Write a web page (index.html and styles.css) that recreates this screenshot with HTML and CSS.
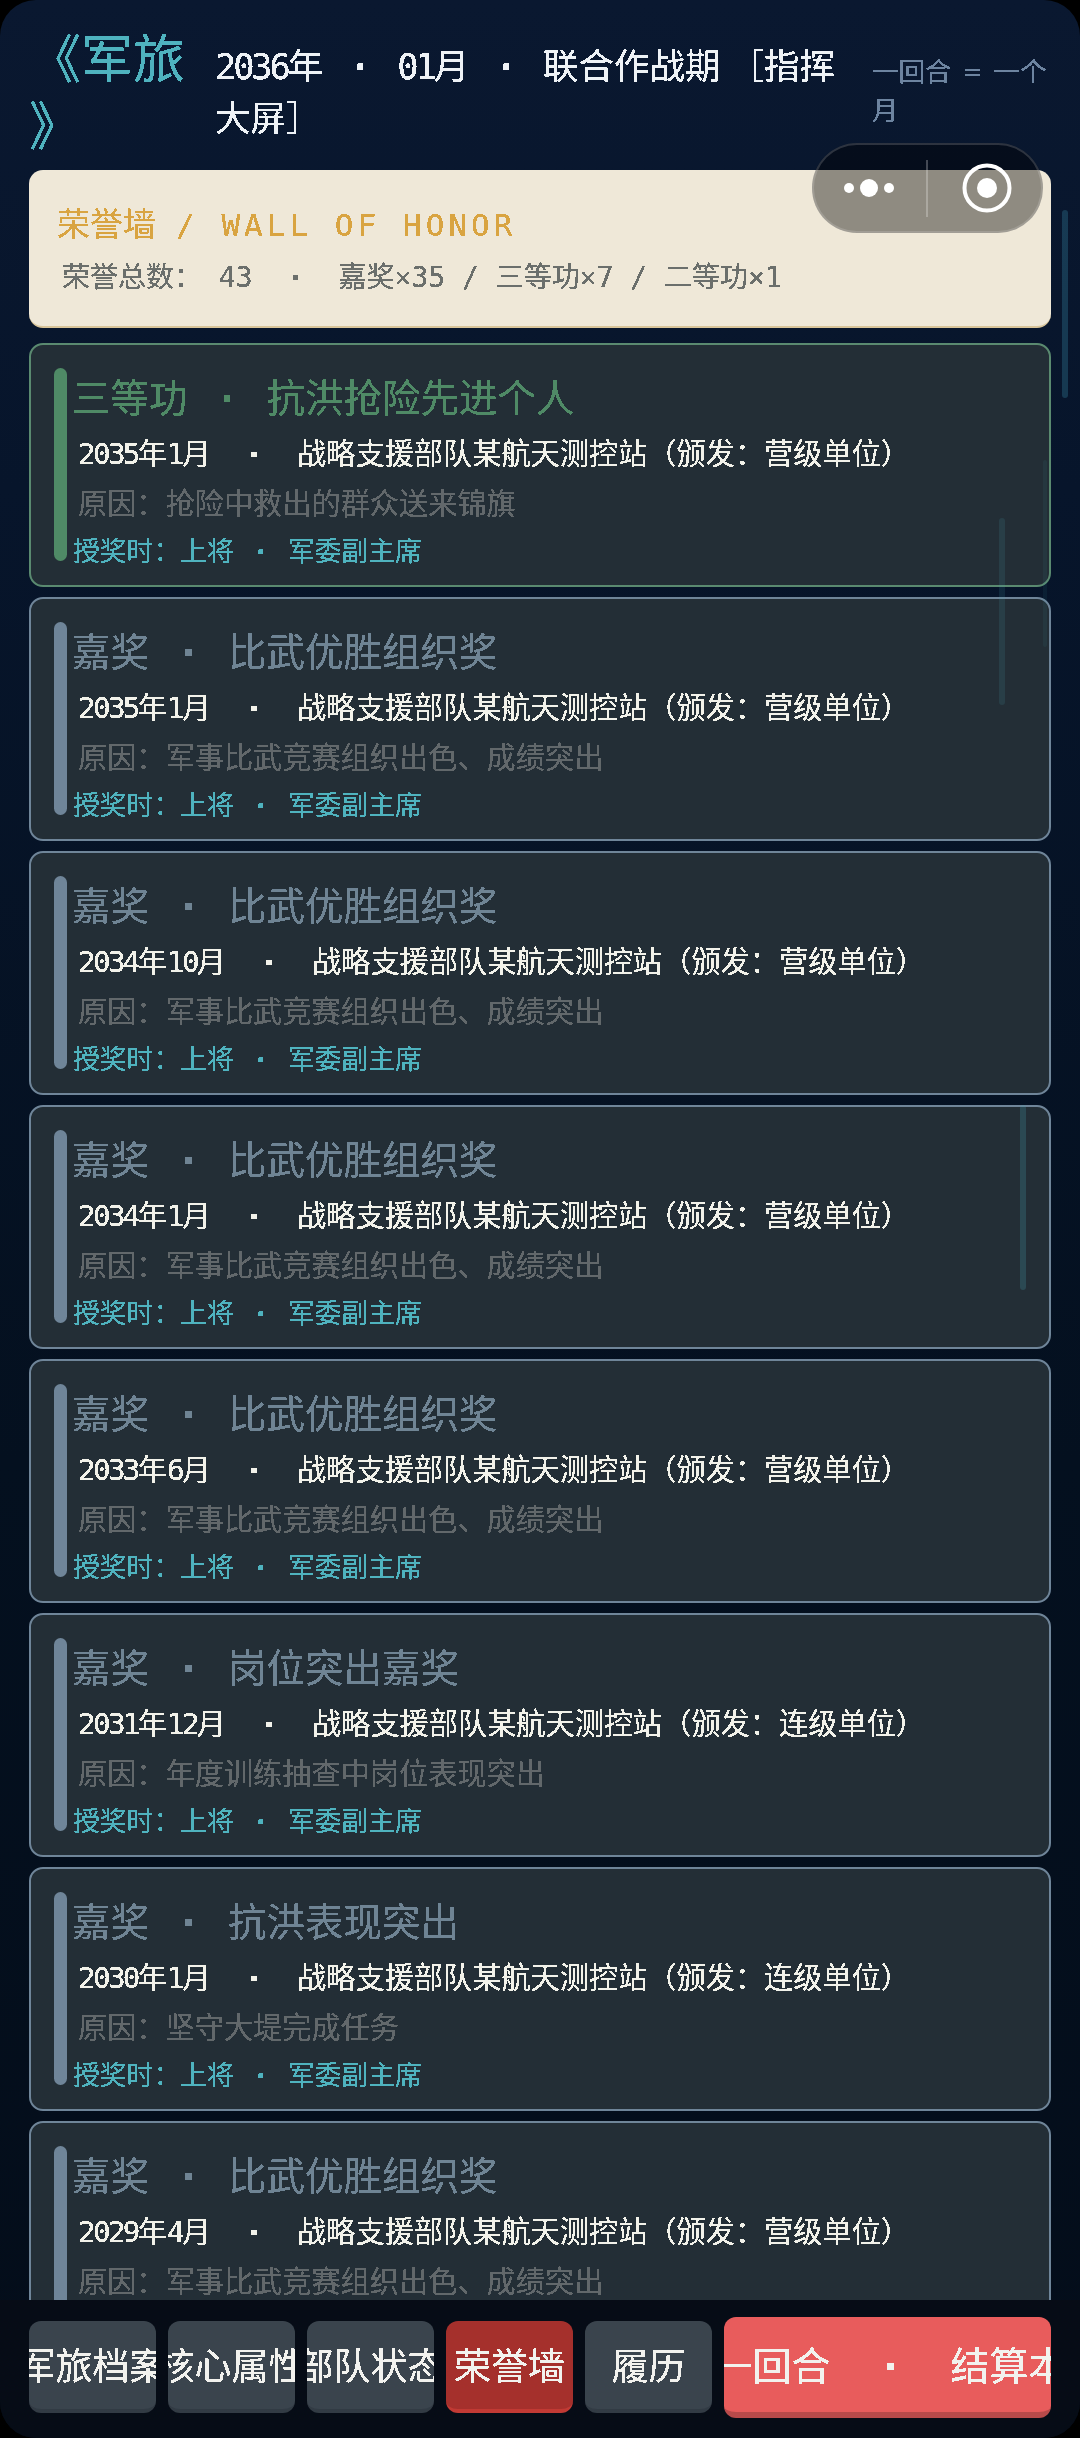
FILE: index.html
```html
<!DOCTYPE html>
<html lang="zh-CN">

<head>
    <meta charset="UTF-8">
    <title>军旅 - 荣誉墙</title>
    <link rel="stylesheet" href="styles.css">
</head>

<body>
    <!-- hard edge for the text, the game font has no smoothing -->
    <svg class="defs" width="0" height="0">
        <filter id="crisp" x="0" y="0" width="100%" height="100%" color-interpolation-filters="sRGB">
            <feComponentTransfer>
                <feFuncA type="discrete" tableValues="0 1 1" />
            </feComponentTransfer>
        </filter>
    </svg>

    <div class="phone">
        <header class="top">
            <h1 class="logo">《军旅》</h1>
            <div class="period"><span class="n">2036</span>年<span class="dot">·</span><span class="n">01</span>月<span class="dot">·</span>联合作战期 &#xFF3B;指挥大屏&#xFF3D;</div>
            <div class="rule">一回合<span class="eq">=</span>一个月</div>
        </header>

        <section class="banner">
            <div class="banner-title">荣誉墙<span class="latin">/ WALL OF HONOR</span></div>
            <div class="banner-sum">荣誉总数&#xFF1A;<span class="n">&nbsp;43</span><span class="dot">·</span>嘉奖<span class="n">×35 / </span>三等功<span class="n">×7 / </span>二等功<span class="n">×1</span></div>
        </section>

        <main class="list">
            <article class="card merit">
                <div class="card-title">三等功<span class="dot">·</span>抗洪抢险先进个人</div>
                <div class="card-line"><span class="n">2035</span>年<span class="n">1</span>月<span class="dot">·</span>战略支援部队某航天测控站&#xFF08;颁发&#xFF1A;营级单位&#xFF09;</div>
                <div class="card-why">原因&#xFF1A;抢险中救出的群众送来锦旗</div>
                <div class="card-by">授奖时&#xFF1A;上将<span class="dot">·</span>军委副主席</div>
            </article>
            <article class="card">
                <div class="card-title">嘉奖<span class="dot">·</span>比武优胜组织奖</div>
                <div class="card-line"><span class="n">2035</span>年<span class="n">1</span>月<span class="dot">·</span>战略支援部队某航天测控站&#xFF08;颁发&#xFF1A;营级单位&#xFF09;</div>
                <div class="card-why">原因&#xFF1A;军事比武竞赛组织出色、成绩突出</div>
                <div class="card-by">授奖时&#xFF1A;上将<span class="dot">·</span>军委副主席</div>
            </article>
            <article class="card">
                <div class="card-title">嘉奖<span class="dot">·</span>比武优胜组织奖</div>
                <div class="card-line"><span class="n">2034</span>年<span class="n">10</span>月<span class="dot">·</span>战略支援部队某航天测控站&#xFF08;颁发&#xFF1A;营级单位&#xFF09;</div>
                <div class="card-why">原因&#xFF1A;军事比武竞赛组织出色、成绩突出</div>
                <div class="card-by">授奖时&#xFF1A;上将<span class="dot">·</span>军委副主席</div>
            </article>
            <article class="card">
                <div class="card-title">嘉奖<span class="dot">·</span>比武优胜组织奖</div>
                <div class="card-line"><span class="n">2034</span>年<span class="n">1</span>月<span class="dot">·</span>战略支援部队某航天测控站&#xFF08;颁发&#xFF1A;营级单位&#xFF09;</div>
                <div class="card-why">原因&#xFF1A;军事比武竞赛组织出色、成绩突出</div>
                <div class="card-by">授奖时&#xFF1A;上将<span class="dot">·</span>军委副主席</div>
            </article>
            <article class="card">
                <div class="card-title">嘉奖<span class="dot">·</span>比武优胜组织奖</div>
                <div class="card-line"><span class="n">2033</span>年<span class="n">6</span>月<span class="dot">·</span>战略支援部队某航天测控站&#xFF08;颁发&#xFF1A;营级单位&#xFF09;</div>
                <div class="card-why">原因&#xFF1A;军事比武竞赛组织出色、成绩突出</div>
                <div class="card-by">授奖时&#xFF1A;上将<span class="dot">·</span>军委副主席</div>
            </article>
            <article class="card">
                <div class="card-title">嘉奖<span class="dot">·</span>岗位突出嘉奖</div>
                <div class="card-line"><span class="n">2031</span>年<span class="n">12</span>月<span class="dot">·</span>战略支援部队某航天测控站&#xFF08;颁发&#xFF1A;连级单位&#xFF09;</div>
                <div class="card-why">原因&#xFF1A;年度训练抽查中岗位表现突出</div>
                <div class="card-by">授奖时&#xFF1A;上将<span class="dot">·</span>军委副主席</div>
            </article>
            <article class="card">
                <div class="card-title">嘉奖<span class="dot">·</span>抗洪表现突出</div>
                <div class="card-line"><span class="n">2030</span>年<span class="n">1</span>月<span class="dot">·</span>战略支援部队某航天测控站&#xFF08;颁发&#xFF1A;连级单位&#xFF09;</div>
                <div class="card-why">原因&#xFF1A;坚守大堤完成任务</div>
                <div class="card-by">授奖时&#xFF1A;上将<span class="dot">·</span>军委副主席</div>
            </article>
            <article class="card">
                <div class="card-title">嘉奖<span class="dot">·</span>比武优胜组织奖</div>
                <div class="card-line"><span class="n">2029</span>年<span class="n">4</span>月<span class="dot">·</span>战略支援部队某航天测控站&#xFF08;颁发&#xFF1A;营级单位&#xFF09;</div>
                <div class="card-why">原因&#xFF1A;军事比武竞赛组织出色、成绩突出</div>
                <div class="card-by">授奖时&#xFF1A;上将<span class="dot">·</span>军委副主席</div>
            </article>
        </main>

        <footer class="tabs">
            <div class="tab"><span>军旅档案</span></div>
            <div class="tab"><span>核心属性</span></div>
            <div class="tab"><span>部队状态</span></div>
            <div class="tab active"><span>荣誉墙</span></div>
            <div class="tab"><span>履历</span></div>
            <div class="tab next"><span>下一回合<i class="dot">·</i>结算本月</span></div>
        </footer>

        <!-- rain streaks over the list -->
        <i class="streak s1"></i>
        <i class="streak s2"></i>
        <i class="streak s3"></i>
        <i class="streak s4"></i>

        <div class="capsule">
            <svg width="231" height="90" viewBox="0 0 231 90">
                <circle cx="37" cy="45" r="5" fill="#fff" />
                <circle cx="57" cy="45" r="9" fill="#fff" />
                <circle cx="77" cy="45" r="5" fill="#fff" />
                <rect x="114" y="17" width="2" height="57" fill="rgba(255,255,255,.25)" />
                <circle cx="175" cy="45" r="22.5" fill="none" stroke="#fff" stroke-width="4" />
                <circle cx="175" cy="45" r="10" fill="#fff" />
            </svg>
        </div>
    </div>
</body>

</html>
```

FILE: styles.css
```css
* {
    margin: 0;
    padding: 0;
    box-sizing: border-box;
}

html,
body {
    width: 1080px;
    height: 2438px;
    background: #000;
    overflow: hidden;
}

body {
    font-family: "Noto Sans CJK SC", sans-serif;
}

.defs {
    display: block;
    height: 0;
}

.phone {
    position: relative;
    width: 1080px;
    height: 2438px;
    display: flex;
    flex-direction: column;
    border-radius: 36px;
    overflow: hidden;
    background: linear-gradient(180deg, #0a1830 0%, #07152b 20%, #04101f 60%, #040d1a 100%);
}

.logo,
.period,
.rule,
.banner-title,
.banner-sum,
.card-title,
.card-line,
.card-why,
.card-by,
.tab span {
    filter: url(#crisp);
}

/* half width pixel-ish digits */
.n,
.latin {
    font-family: "DejaVu Sans Mono", monospace;
    letter-spacing: -.09em;
}

.dot {
    display: inline-block;
    text-align: center;
    font-style: normal;
    font-family: "DejaVu Sans Mono", monospace;
    font-weight: 700;
}

.top {
    display: flex;
    align-items: center;
    padding: 8px 29px 0;
    height: 170px;
    flex: none;
}

.logo {
    width: 160px;
    flex: none;
    margin-right: 26px;
    font-size: 52px;
    font-weight: 400;
    line-height: 67px;
    line-break: anywhere;
    color: #4fb3bf;
}

.period {
    width: 640px;
    flex: none;
    margin-right: 17px;
    font-size: 35.5px;
    line-height: 49px;
    color: #eef2f6;
}

.period .dot {
    width: 74px;
}

.rule {
    width: 180px;
    flex: none;
    font-size: 26.5px;
    line-height: 37px;
    color: #6d84a0;
}

.eq {
    display: inline-block;
    width: 42px;
    text-align: center;
    font-family: "DejaVu Sans Mono", monospace;
}

.banner {
    flex: none;
    height: 158px;
    margin: 0 29px 15px;
    padding: 24px 28px 0;
    border-radius: 14px;
    background: #efe8d8;
    border-bottom: 2px solid #d9c59a;
}

.banner-title {
    font-size: 33px;
    line-height: 56px;
    color: #d9a441;
    white-space: pre;
}

.latin {
    margin-left: 20px;
    letter-spacing: .13em;
    font-size: 31px;
}

.banner-sum {
    margin-top: -4px;
    padding-left: 5px;
    font-size: 28px;
    line-height: 52px;
    color: #6b6f6c;
    white-space: nowrap;
}

.banner-sum .n {
    letter-spacing: 0;
}

.banner-sum .dot {
    width: 86px;
}

.list {
    flex: 1;
    min-height: 0;
    overflow: hidden;
    display: flex;
    flex-direction: column;
    gap: 10px;
    padding: 0 29px;
}

.card {
    position: relative;
    flex: none;
    height: 244px;
    padding: 21px 20px 0 41px;
    border: 2px solid #6f8599;
    border-radius: 14px;
    background: #232e36;
    white-space: nowrap;
}

/* side bar */
.card::before {
    content: "";
    position: absolute;
    left: 23px;
    top: 23px;
    bottom: 24px;
    width: 13px;
    border-radius: 7px;
    background: #6f8599;
}

.card.merit {
    border-color: #5a8a70;
}

.card.merit::before {
    background: #4f8a66;
}

.card-title {
    font-size: 38.5px;
    line-height: 58px;
    color: #6f8494;
}

.card-title .dot {
    width: 79px;
}

.merit .card-title {
    color: #4f8a66;
}

.card-line {
    padding-left: 6px;
    font-size: 29.2px;
    line-height: 46px;
    color: #f2f2ea;
}

.card-line .dot {
    width: 86px;
}

.card-why {
    padding-left: 6px;
    font-size: 29.2px;
    line-height: 48px;
    color: #62686b;
}

.card-by {
    padding-left: 1px;
    font-size: 26.8px;
    line-height: 50px;
    color: #4fb3bf;
}

.card-by .dot {
    width: 54px;
}

.tabs {
    flex: none;
    height: 138px;
    display: flex;
    align-items: center;
    gap: 12px;
    padding: 0 29px 4px;
    background: #060c16;
}

.tab {
    flex: none;
    width: 127px;
    height: 92px;
    display: flex;
    align-items: center;
    justify-content: center;
    padding-bottom: 3px;
    overflow: hidden;
    white-space: nowrap;
    font-size: 37px;
    color: #f2f2ee;
    background: #3a444d;
    border-radius: 12px;
    border-bottom: 4px solid #323b44;
}

.tab span {
    flex: none;
}

.tab.active {
    background: #a5302c;
    border-bottom-color: #c23a34;
}

.tab.next {
    flex: 1;
    height: 101px;
    padding-left: 6px;
    font-size: 39px;
    background: #e85c5c;
    border-bottom: 6px solid #b84a4a;
}

.tab.next .dot {
    width: 120px;
}

.streak {
    position: absolute;
    width: 6px;
    background: rgba(70, 160, 175, .14);
    border-radius: 3px;
}

.s1 {
    left: 1062px;
    top: 210px;
    height: 188px;
    background: rgba(60, 150, 180, .28);
}

.s2 {
    left: 1043px;
    top: 460px;
    height: 187px;
    width: 4px;
    background: rgba(70, 160, 175, .08);
}

.s3 {
    left: 999px;
    top: 518px;
    height: 187px;
}

.s4 {
    left: 1020px;
    top: 1105px;
    height: 185px;
    background: rgba(70, 160, 175, .24);
}

/* wechat mini program capsule */
.capsule {
    position: absolute;
    left: 812px;
    top: 143px;
    width: 231px;
    height: 90px;
    border-radius: 45px;
    background: rgba(0, 0, 0, .4);
    box-shadow: inset 0 0 0 2px rgba(255, 255, 255, .16);
}

.capsule svg {
    display: block;
}
```
